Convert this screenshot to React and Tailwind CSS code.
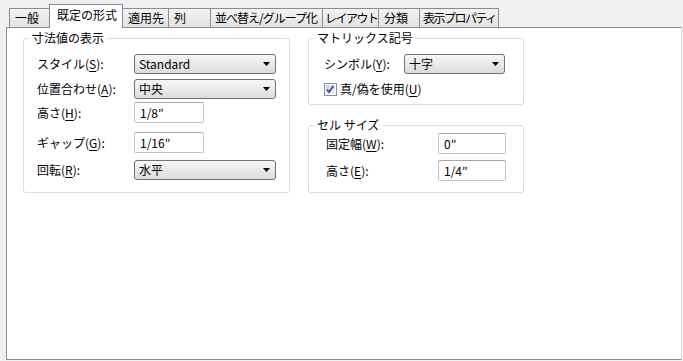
import React from 'react';

// Windows 7 style property sheet: "既定の形式" tab
const tabs = [
  { label: '一般', w: 'w-[41px]', pad: 'pl-[5px]' },
  { label: '既定の形式', w: 'w-[74px]', pad: 'pl-[7px]', active: true },
  { label: '適用先', w: 'w-[47px]', pad: 'pl-[5px]' },
  { label: '列', w: 'w-[43px]', pad: 'pl-[5px]' },
  { label: '並べ替え/グループ化', w: 'w-[113px]', pad: 'pl-[4px] tracking-[-1px]' },
  { label: 'レイアウト', w: 'w-[57px]', pad: 'pl-[2px] tracking-[-1.5px]' },
  { label: '分類', w: 'w-[42px]', pad: 'pl-[5px]' },
  { label: '表示プロパティ', w: 'w-[80px]', pad: 'pl-[3px] tracking-[-1.5px]' },
];

const Key = ({ children }) => <span className="underline underline-offset-2">{children}</span>;

const Label = ({ text, k, w }) => (
  <div className={`shrink-0 ${w}`}>
    {text}(<Key>{k}</Key>):
  </div>
);

const Select = ({ value, w }) => (
  <div className={`flex items-center justify-between h-[20px] rounded-[3px] border border-[#707070] bg-linear-to-b from-[#f7f7f7] to-[#dcdcdc] pl-[4px] pr-[5px] ${w}`}>
    <span>{value}</span>
    <svg width="7" height="4" viewBox="0 0 7 4">
      <path d="M0 0h7L3.5 4z" fill="#000" />
    </svg>
  </div>
);

const Input = ({ value, w }) => (
  <div className={`flex items-center h-[21px] rounded-[2px] border border-[#c4c4c4] border-t-[#a9a9a9] bg-white pl-[5px] ${w}`}>
    {value}
  </div>
);

const Checkbox = () => (
  <svg width="13" height="13" viewBox="0 0 13 13" className="shrink-0">
    <defs>
      <linearGradient id="cb" x1="0" y1="0" x2="1" y2="1">
        <stop offset="0" stopColor="#cbcfd5" />
        <stop offset="1" stopColor="#f6f6f6" />
      </linearGradient>
    </defs>
    <rect x="0.5" y="0.5" width="12" height="12" fill="#fff" stroke="#8e8f8f" />
    <rect x="2" y="2" width="9" height="9" fill="url(#cb)" />
    <path d="M3 6.5l2 2.5 4.5-6" fill="none" stroke="#2d4fb0" strokeWidth="1.8" />
  </svg>
);

const Group = ({ title, className, children }) => (
  <fieldset className={`border border-[#d5dfe5] rounded-[3px] p-0 m-0 ${className}`}>
    <legend className="ml-[5px] px-[3px] leading-[14px]">{title}</legend>
    {children}
  </fieldset>
);

export default function App() {
  return (
    <div className="w-[683px] h-[361px] overflow-hidden bg-[#f0f0f0] text-[12px] leading-[14px] text-black font-['Noto_Sans_CJK_JP','Noto_Sans',sans-serif]">
      {/* tab strip */}
      <div className="flex items-end h-[27px] pl-[9px]">
        {tabs.map((t, i) => (
          <div
            key={t.label}
            className={
              (t.active
                ? `relative z-10 -mb-px h-[24px] -ml-px border border-b-0 border-[#898c95] bg-white flex items-start pt-[3px]`
                : `h-[19px] ${i === 0 ? '' : '-ml-px'} border border-b-0 border-[#898c95] bg-linear-to-b from-[#f3f3f3] to-[#e3e3e3] flex items-center`) +
              ` ${t.w} ${t.pad} whitespace-nowrap overflow-hidden`
            }
          >
            {t.label}
          </div>
        ))}
      </div>

      {/* page */}
      <div className="ml-[6px] w-[676px] h-[333px] border border-[#898c95] border-r-[#d9d9d9] bg-white pt-[3px] pl-[16px] flex items-start gap-[18px]">
        <Group title="寸法値の表示" className="w-[266px] h-[162px]">
          <div className="px-[13px] flex flex-col">
            <div className="flex items-center mt-[9px]">
              <Label text="スタイル" k="S" w="w-[97px]" />
              <Select value="Standard" w="w-[142px]" />
            </div>
            <div className="flex items-center mt-[5px]">
              <Label text="位置合わせ" k="A" w="w-[97px]" />
              <Select value="中央" w="w-[142px]" />
            </div>
            <div className="flex items-center mt-[3px]">
              <Label text="高さ" k="H" w="w-[97px]" />
              <Input value="1/8″" w="w-[70px]" />
            </div>
            <div className="flex items-center mt-[9px]">
              <Label text="ギャップ" k="G" w="w-[97px]" />
              <Input value="1/16″" w="w-[70px]" />
            </div>
            <div className="flex items-center mt-[7px]">
              <Label text="回転" k="R" w="w-[97px]" />
              <Select value="水平" w="w-[142px]" />
            </div>
          </div>
        </Group>

        <div className="flex flex-col">
          <Group title="マトリックス記号" className="w-[216px] h-[74px]">
            <div className="pl-[15px] flex flex-col">
              <div className="flex items-center mt-[9px]">
                <Label text="シンボル" k="Y" w="w-[80px]" />
                <Select value="十字" w="w-[101px]" />
              </div>
              <div className="flex items-center gap-[3px] mt-[8px]">
                <Checkbox />
                <span>
                  真/偽を使用(<Key>U</Key>)
                </span>
              </div>
            </div>
          </Group>

          <Group title="セル サイズ" className="w-[216px] h-[75px] mt-[13px]">
            <div className="pl-[17px] flex flex-col">
              <div className="flex items-center mt-[1px]">
                <Label text="固定幅" k="W" w="w-[112px]" />
                <Input value="0″" w="w-[68px]" />
              </div>
              <div className="flex items-center mt-[6px]">
                <Label text="高さ" k="E" w="w-[112px]" />
                <Input value="1/4″" w="w-[68px]" />
              </div>
            </div>
          </Group>
        </div>
      </div>
    </div>
  );
}
